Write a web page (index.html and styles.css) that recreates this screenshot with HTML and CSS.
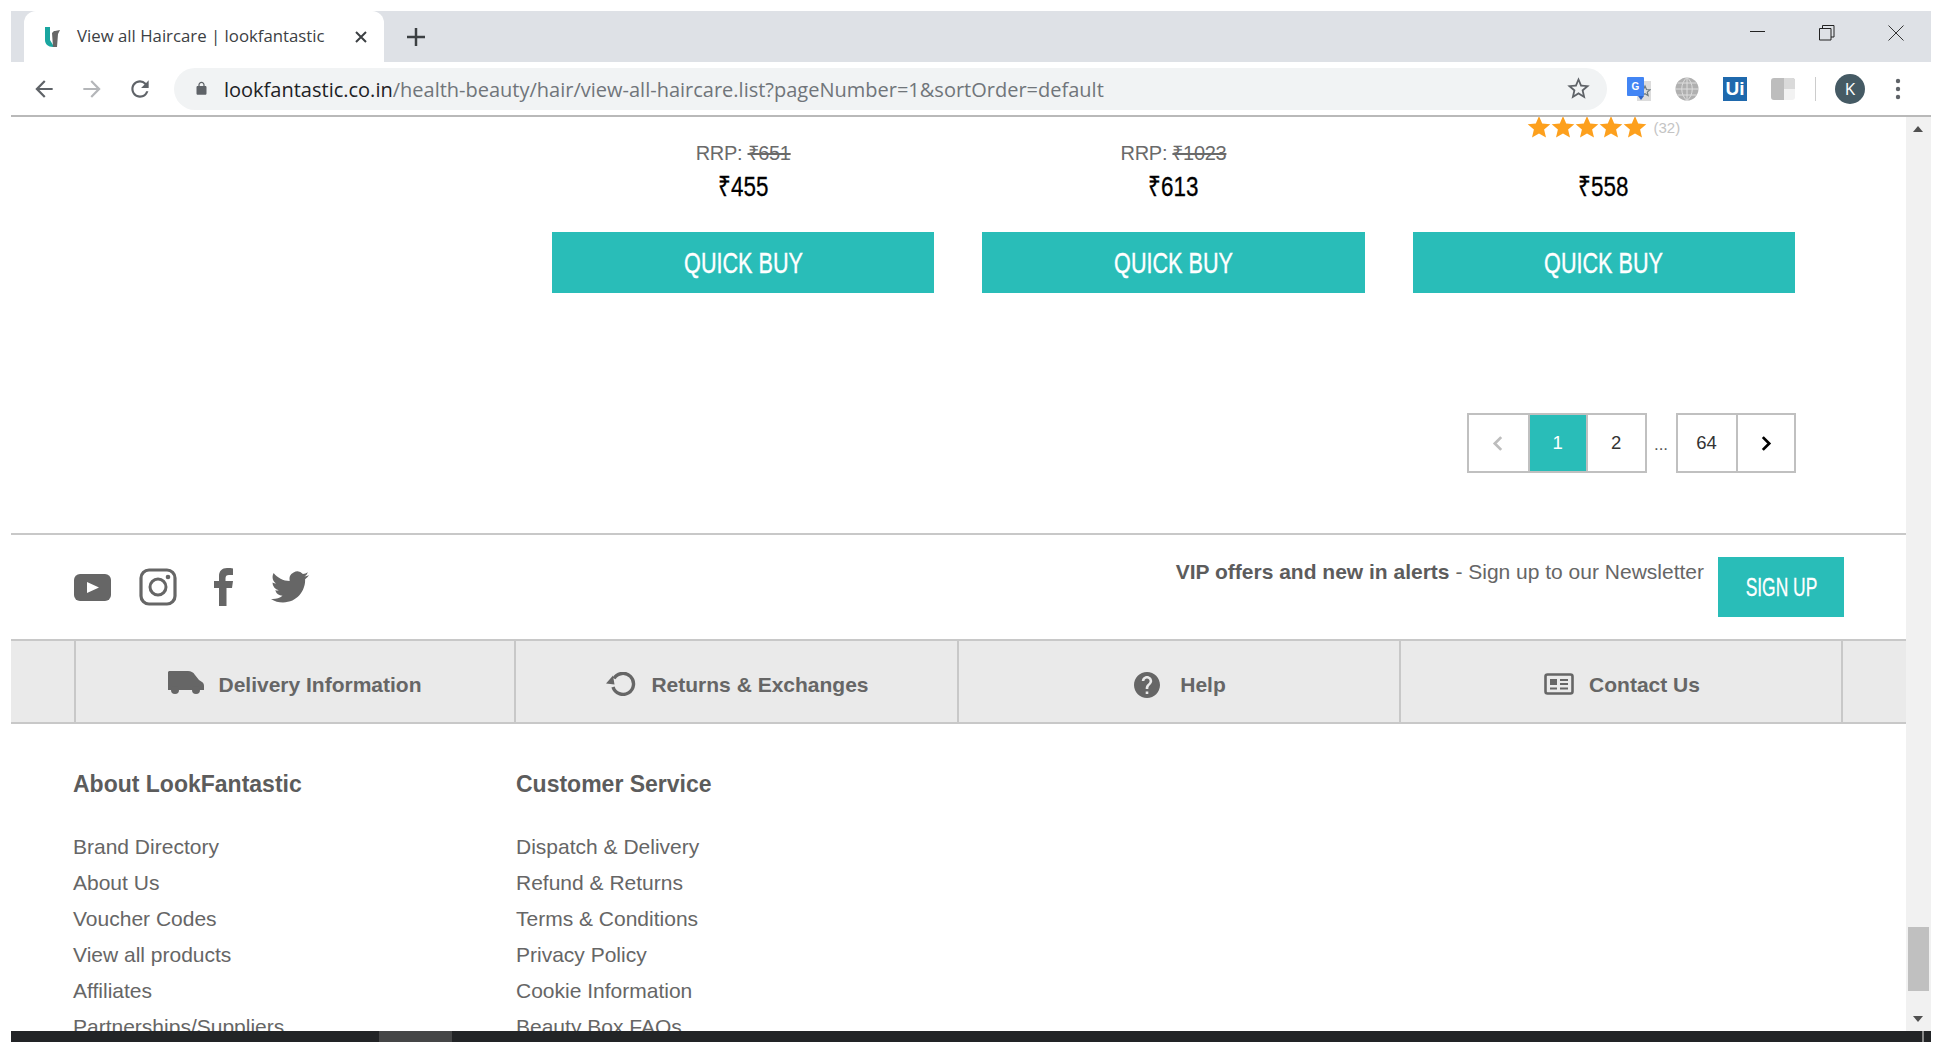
FILE: index.html
```html
<!DOCTYPE html>
<html lang="en">

<head>
    <meta charset="UTF-8" />
    <title>View all Haircare | lookfantastic</title>
    <link rel="stylesheet" href="styles.css">
</head>

<body>
    <svg class="defs" width="0" height="0">
        <symbol id="star" viewBox="0 0 24 24">
            <path d="M12 1l3.2 7.6 8.1.7-6.2 5.3 1.9 8-7-4.2-7 4.200 1.900-8L.7 9.300l8.100-.7z" />
        </symbol>
    </svg>
    <div class="window">
        <div class="tabstrip">
            <div class="tab">
                <svg class="favicon" viewBox="0 0 16 20">
                    <path fill="#1aa6a0" d="M0 0h5v13l3 5v2C3 20 0 17 0 13z" />
                    <path fill="#666" d="M7 6l2-2 1 0 5-1-2 4-1 13H8z" />
                </svg>
                <span class="tab_title">View all Haircare | lookfantastic</span>
                <svg class="tab_close" viewBox="0 0 14 14">
                    <path d="M2 2l10 10M12 2L2 12" stroke="#3c4043" stroke-width="2" />
                </svg>
            </div>
            <svg class="new_tab" viewBox="0 0 16 16">
                <path d="M8 0v16M0 8h16" stroke="#3c4043" stroke-width="2.200" />
            </svg>
            <div class="win_controls">
                <svg class="win_btn" viewBox="0 0 16 16"><path d="M0 6.500h15" stroke="#222" /></svg>
                <svg class="win_btn" viewBox="0 0 16 16">
                    <path d="M.5 3.500h11.500v11.500H.5zM3.500 3.500V.5h11.500v11.500H12" fill="none" stroke="#222" />
                </svg>
                <svg class="win_btn" viewBox="0 0 16 16"><path d="M.5.500l15 15M15.500.500l-15 15" stroke="#333" /></svg>
            </div>
        </div>

        <div class="toolbar">
            <svg class="nav_icon" viewBox="0 0 24 24"><path fill="#5f6368" d="M20 11H7.830l5.590-5.590L12 4l-8 8 8 8 1.410-1.410L7.830 13H20v-2z" /></svg>
            <svg class="nav_icon" viewBox="0 0 24 24"><path fill="#b4b6b9" d="M4 11h12.170l-5.590-5.590L12 4l8 8-8 8-1.410-1.410L16.170 13H4v-2z" /></svg>
            <svg class="nav_icon" viewBox="0 0 24 24"><path fill="#5f6368" d="M17.650 6.350A7.958 7.958 0 0012 4c-4.420 0-7.990 3.580-7.990 8s3.570 8 7.990 8c3.730 0 6.840-2.550 7.730-6h-2.080A5.990 5.990 0 0112 18c-3.310 0-6-2.690-6-6s2.690-6 6-6c1.660 0 3.140.69 4.220 1.780L13 11h7V4l-2.350 2.350z" /></svg>
            <div class="omnibox">
                <svg class="lock" viewBox="0 0 24 24"><path fill="#5f6368" d="M18 8h-1V6c0-2.760-2.240-5-5-5S7 3.240 7 6v2H6c-1.100 0-2 .9-2 2v10c0 1.100.9 2 2 2h12c1.100 0 2-.9 2-2V10c0-1.100-.9-2-2-2zm-9-2c0-1.660 1.340-3 3-3s3 1.340 3 3v2H9V6z" /></svg>
                <span class="url"><span class="url_host">lookfantastic.co.in</span>/health-beauty/hair/view-all-haircare.list?pageNumber=1&amp;sortOrder=default</span>
                <svg class="bookmark" viewBox="0 0 24 24"><path fill="#5f6368" d="M22 9.240l-7.190-.62L12 2 9.190 8.630 2 9.240l5.460 4.730L5.820 21 12 17.270 18.180 21l-1.630-7.030L22 9.240zM12 15.400l-3.760 2.270 1-4.280-3.320-2.880 4.380-.38L12 6.100l1.710 4.040 4.380.38-3.320 2.880 1 4.280L12 15.400z" /></svg>
            </div>
            <div class="extensions">
                <div class="ext ext_translate">
                    <svg class="translate_back" viewBox="0 0 14 20">
                        <rect width="14" height="20" fill="#dcdcdc" />
                        <path d="M8 5l1.500 3.500 3.500.3-2.700 2.300.8 3.400L8 12.700l-3 1.800.8-3.400L3 8.800l3.500-.3z" fill="none" stroke="#6c7a80" stroke-width="1.200" />
                    </svg>
                    <span class="translate_front">G</span>
                    <span class="translate_tail"></span>
                </div>
                <svg class="ext" viewBox="0 0 24 24">
                    <circle cx="12" cy="12" r="11.500" fill="#b0b0b0" />
                    <path d="M.5 12h23M2.500 6h19M2.500 18h19M12 .5v23M12 .5C5 6 5 18 12 23.500M12 .5C19 6 19 18 12 23.500" fill="none" stroke="#ddd" />
                </svg>
                <div class="ext ext_ui">Ui</div>
                <svg class="ext" viewBox="0 0 24 24">
                    <path fill="#bdbdbd" d="M3 1h18a3 3 0 013 3v8H13v11H3a3 3 0 01-3-3V4a3 3 0 013-3z" />
                    <path fill="#dadada" d="M13 1h8a3 3 0 013 3v8H13z" />
                    <path fill="#f2f2f2" d="M13 12h11v8a3 3 0 01-3 3h-8z" />
                </svg>
                <span class="ext_sep"></span>
                <div class="avatar">K</div>
                <svg class="menu_dots" viewBox="0 0 6 22">
                    <circle cx="3" cy="3" r="2.200" fill="#5f6368" />
                    <circle cx="3" cy="11" r="2.200" fill="#5f6368" />
                    <circle cx="3" cy="19" r="2.200" fill="#5f6368" />
                </svg>
            </div>
        </div>

        <div class="viewport">
            <div class="page">
                <div class="products">
                    <div class="card">
                        <div class="rating"></div>
                        <div class="rrp">RRP: <s>₹651</s></div>
                        <div class="price"><span>₹455</span></div>
                        <div class="quick_buy"><span>QUICK BUY</span></div>
                    </div>
                    <div class="card">
                        <div class="rating"></div>
                        <div class="rrp">RRP: <s>₹1023</s></div>
                        <div class="price"><span>₹613</span></div>
                        <div class="quick_buy"><span>QUICK BUY</span></div>
                    </div>
                    <div class="card">
                        <div class="rating">
                            <svg class="star"><use href="#star" /></svg>
                            <svg class="star"><use href="#star" /></svg>
                            <svg class="star"><use href="#star" /></svg>
                            <svg class="star"><use href="#star" /></svg>
                            <svg class="star"><use href="#star" /></svg>
                            <span class="rating_count">(32)</span>
                        </div>
                        <div class="rrp"></div>
                        <div class="price"><span>₹558</span></div>
                        <div class="quick_buy"><span>QUICK BUY</span></div>
                    </div>
                </div>

                <div class="pagination">
                    <div class="page_group">
                        <div class="page_cell page_prev">
                            <svg class="chevron" viewBox="0 0 10 16"><path d="M8 2L2 8l6 6" fill="none" stroke="#bdbdbd" stroke-width="2.600" /></svg>
                        </div>
                        <div class="page_cell page_active">1</div>
                        <div class="page_cell">2</div>
                    </div>
                    <span class="page_dots">...</span>
                    <div class="page_group">
                        <div class="page_cell">64</div>
                        <div class="page_cell">
                            <svg class="chevron" viewBox="0 0 10 16"><path d="M2 2l6 6-6 6" fill="none" stroke="#000" stroke-width="2.600" /></svg>
                        </div>
                    </div>
                </div>

                <div class="social_bar">
                    <div class="social_icons">
                        <svg class="social_yt" viewBox="0 0 37 27">
                            <rect width="37" height="27" rx="6" fill="#666" />
                            <path d="M13 8l12 5.500L13 19z" fill="#fff" />
                        </svg>
                        <svg class="social_ig" viewBox="0 0 38 38">
                            <rect x="2" y="2" width="34" height="34" rx="8" fill="none" stroke="#666" stroke-width="3.200" />
                            <circle cx="19" cy="19" r="8" fill="none" stroke="#666" stroke-width="3" />
                            <circle cx="29" cy="9" r="2.300" fill="#666" />
                        </svg>
                        <svg class="social_fb" viewBox="0 0 19 38">
                            <path fill="#666" d="M5 38V20H0v-7h5V8c0-5 3-8 8-8 2.500 0 4.500.2 6 .4V7h-4c-2.500 0-3.500 1-3.500 3.500V13H19l-1 7h-5.500v18z" />
                        </svg>
                        <svg class="social_tw" viewBox="0 0 24 24">
                            <path fill="#666" d="M23.953 4.570a10 10 0 01-2.825.775 4.958 4.958 0 002.163-2.723c-.951.555-2.005.959-3.127 1.184a4.920 4.920 0 00-8.384 4.482C7.690 8.095 4.067 6.130 1.640 3.162a4.822 4.822 0 00-.666 2.475c0 1.710.870 3.213 2.188 4.096a4.904 4.904 0 01-2.228-.616v.060a4.923 4.923 0 003.946 4.827 4.996 4.996 0 01-2.212.085 4.936 4.936 0 004.604 3.417 9.867 9.867 0 01-6.102 2.105c-.390 0-.779-.023-1.170-.067a13.995 13.995 0 007.557 2.209c9.053 0 13.998-7.496 13.998-13.985 0-.210 0-.420-.015-.630A9.935 9.935 0 0024 4.590z" />
                        </svg>
                    </div>
                    <div class="newsletter">
                        <p class="newsletter_text"><b>VIP offers and new in alerts</b> - Sign up to our Newsletter</p>
                        <div class="sign_up"><span>SIGN UP</span></div>
                    </div>
                </div>

                <div class="info_bar">
                    <div class="info_item info_first">
                        <svg class="info_truck" viewBox="0 0 36 24">
                            <path fill="#666" d="M1 0h19c3 0 5 1 7 4l4 5 3 2c1.500 1 2 2 2 4v4H0V1z" />
                            <circle cx="7" cy="19" r="4" fill="#666" />
                            <circle cx="28" cy="19" r="4" fill="#666" />
                        </svg>
                        <span>Delivery Information</span>
                    </div>
                    <div class="info_item">
                        <svg class="info_return" viewBox="0 0 30 24">
                            <path d="M8 6.500A10.500 10.500 0 1 1 7 15" fill="none" stroke="#666" stroke-width="3.400" />
                            <path d="M0 11.500l7-8 1.500 9z" fill="#666" />
                        </svg>
                        <span>Returns &amp; Exchanges</span>
                    </div>
                    <div class="info_item">
                        <svg class="info_help" viewBox="2 2 20 20"><path fill="#666" d="M12 2C6.480 2 2 6.480 2 12s4.480 10 10 10 10-4.480 10-10S17.520 2 12 2zm1 17h-2v-2h2v2zm2.070-7.750l-.9.920C13.450 12.900 13 13.500 13 15h-2v-.5c0-1.100.45-2.100 1.170-2.830l1.240-1.260c.37-.36.59-.86.59-1.410 0-1.100-.9-2-2-2s-2 .9-2 2H8c0-2.210 1.790-4 4-4s4 1.790 4 4c0 .88-.36 1.680-.93 2.250z" /></svg>
                        <span>Help</span>
                    </div>
                    <div class="info_item">
                        <svg class="info_contact" viewBox="0 0 30 22">
                            <rect x="1.500" y="1.500" width="27" height="19" rx="2" fill="none" stroke="#666" stroke-width="2.600" />
                            <rect x="6" y="6" width="7" height="6" fill="#666" />
                            <path d="M6 15.500h7M16 7h8M16 11h8M16 15.500h8" stroke="#666" stroke-width="2.200" />
                        </svg>
                        <span>Contact Us</span>
                    </div>
                </div>

                <div class="footer_links">
                    <div class="footer_col">
                        <h4>About LookFantastic</h4>
                        <a>Brand Directory</a>
                        <a>About Us</a>
                        <a>Voucher Codes</a>
                        <a>View all products</a>
                        <a>Affiliates</a>
                        <a>Partnerships/Suppliers</a>
                    </div>
                    <div class="footer_col">
                        <h4>Customer Service</h4>
                        <a>Dispatch &amp; Delivery</a>
                        <a>Refund &amp; Returns</a>
                        <a>Terms &amp; Conditions</a>
                        <a>Privacy Policy</a>
                        <a>Cookie Information</a>
                        <a>Beauty Box FAQs</a>
                    </div>
                </div>
            </div>

            <div class="scrollbar">
                <span class="arrow_up"></span>
                <div class="thumb"></div>
                <span class="arrow_down"></span>
            </div>
        </div>

        <div class="taskbar">
            <span class="task_active"></span>
            <span class="task_clock">11:45 PM</span>
            <span class="task_edge"></span>
        </div>
    </div>
</body>

</html>
```

FILE: styles.css
```css
* {
    box-sizing: border-box;
}

html,
body {
    height: 100%;
    margin: 0;
    overflow: hidden;
    background: #fff;
}

body {
    padding: 11px 11px 0;
    font-family: "Liberation Sans", Arial, sans-serif;
}

.defs {
    display: block;
    height: 0;
}

.window {
    height: 1031px;
    display: flex;
    flex-direction: column;
    overflow: hidden;
}

/* browser chrome */
.tabstrip {
    height: 51px;
    flex: none;
    display: flex;
    align-items: center;
    background: #dee1e6;
}

.tab {
    align-self: stretch;
    width: 360px;
    margin-left: 13px;
    padding-left: 21px;
    display: flex;
    align-items: center;
    background: #fff;
    border-radius: 12px 12px 0 0;
}

.favicon {
    width: 16px;
    height: 20px;
    margin-right: 16px;
}

.tab_title {
    width: 277px;
    margin-top: -2px;
    font: 16.800px "Open Sans", sans-serif;
    color: #3c4043;
    white-space: nowrap;
}

.tab_close {
    width: 14px;
    height: 14px;
}

.new_tab {
    width: 18px;
    height: 18px;
    margin-left: 23px;
}

.win_controls {
    margin-left: auto;
    margin-right: 27px;
    margin-top: -8px;
    display: flex;
    gap: 53px;
}

.win_btn {
    width: 16px;
    height: 16px;
}

.toolbar {
    height: 55px;
    flex: none;
    display: flex;
    align-items: center;
    padding-left: 20px;
    border-bottom: 2px solid #b9b9b9;
    background: #fff;
}

.nav_icon {
    width: 26px;
    height: 26px;
    margin-right: 22px;
}

.omnibox {
    width: 1433px;
    height: 42px;
    margin-left: -1px;
    flex: none;
    display: flex;
    align-items: center;
    padding-left: 20px;
    border-radius: 21px;
    background: #f1f3f4;
}

.lock {
    width: 15px;
    height: 17px;
}

.url {
    margin-left: 15px;
    margin-top: 1px;
    font: 20px "Open Sans", sans-serif;
    color: #70757a;
    white-space: nowrap;
}

.url_host {
    color: #202124;
}

.bookmark {
    width: 27px;
    height: 27px;
    margin-left: auto;
    margin-right: 15px;
}

.extensions {
    display: flex;
    align-items: center;
    margin-left: 20px;
}

.ext {
    width: 24px;
    height: 24px;
    margin-right: 24px;
    flex: none;
}

.ext_translate {
    position: relative;
}

.translate_back {
    position: absolute;
    top: 4px;
    right: 0;
    width: 14px;
    height: 20px;
}

.translate_front {
    position: absolute;
    top: 0;
    left: 0;
    width: 17px;
    height: 19px;
    background: #4285f4;
    border-radius: 1px;
    font: bold 10px/19px "Liberation Sans", sans-serif;
    color: #fff;
    text-align: center;
}

.translate_tail {
    position: absolute;
    top: 19px;
    left: 11px;
    width: 0;
    height: 0;
    border-left: 3px solid transparent;
    border-right: 3px solid transparent;
    border-top: 4px solid #2f63c4;
}

.ext_ui {
    background: #1f69ad;
    color: #fff;
    font: bold 19px/24px "Liberation Sans", sans-serif;
    text-align: center;
}

.ext_sep {
    width: 1px;
    height: 24px;
    margin-left: -4px;
    margin-right: 19px;
    background: #ccc;
}

.avatar {
    width: 30px;
    height: 30px;
    border-radius: 50%;
    background: #455a64;
    color: #fff;
    font: 17px/30px "Open Sans", sans-serif;
    text-align: center;
}

.menu_dots {
    width: 6px;
    height: 22px;
    margin-left: 30px;
}

/* page */
.viewport {
    flex: 1;
    min-height: 0;
    display: flex;
}

.page {
    flex: 1;
    min-width: 0;
    overflow: hidden;
    background: #fff;
}

.products {
    display: grid;
    grid-template-columns: repeat(3, 1fr);
    column-gap: 48px;
    padding: 0 111px 0 541px;
}

.card {
    display: flex;
    flex-direction: column;
    align-items: center;
}

.rating {
    height: 25px;
    margin-top: -3px;
    display: flex;
    align-items: center;
}

.star {
    width: 24px;
    height: 24px;
    fill: #fda01d;
}

.rating_count {
    margin-left: 6px;
    margin-top: 2px;
    font-size: 15px;
    color: #c4c4c4;
}

.rrp {
    height: 28px;
    font-size: 20px;
    line-height: 28px;
    color: #6a6a6a;
    letter-spacing: -0.3px;
}

.price {
    height: 40px;
    font-size: 28px;
    line-height: 40px;
    color: #000;
}

.price span {
    display: inline-block;
    transform: scaleX(0.8);
    -webkit-text-stroke: 0.3px #000;
}

.quick_buy {
    align-self: stretch;
    height: 61px;
    margin-top: 25px;
    background: #29bdb8;
    color: #fff;
    font-size: 30px;
    line-height: 61px;
    text-align: center;
}

.quick_buy span {
    display: inline-block;
    transform: scaleX(0.72);
    -webkit-text-stroke: 0.4px #fff;
}

.pagination {
    margin-top: 120px;
    padding-right: 110px;
    display: flex;
    justify-content: flex-end;
    align-items: center;
}

.page_group {
    display: flex;
    border: 2px solid #c0c0c0;
}

.page_cell {
    width: 58.500px;
    height: 56px;
    display: flex;
    align-items: center;
    justify-content: center;
    font-size: 18.500px;
    color: #333;
    border-left: 2px solid #c0c0c0;
}

.page_cell:first-child {
    border-left: none;
    width: 58px;
}

.page_cell.page_prev {
    width: 59px;
}

.page_active {
    background: #29bdb8;
    color: #fff;
}

.page_dots {
    width: 29px;
    font-size: 17px;
    text-align: center;
    color: #555;
    padding-top: 3px;
}

.chevron {
    width: 12px;
    height: 17px;
}

.social_bar {
    height: 106px;
    margin-top: 60px;
    padding: 0 62px;
    border-top: 2px solid #c8c8c8;
    display: flex;
    justify-content: space-between;
}

.social_icons {
    display: flex;
    align-items: center;
    gap: 28px;
    height: 104px;
}

.social_yt {
    width: 37px;
    height: 27px;
    margin-left: 1px;
}

.social_ig {
    width: 38px;
    height: 38px;
}

.social_fb {
    width: 19px;
    height: 38px;
    margin-left: 9px;
}

.social_tw {
    width: 38px;
    height: 38px;
    margin-left: 10px;
}

.newsletter {
    display: flex;
    margin-top: 22px;
    gap: 14px;
}

.newsletter_text {
    margin: 0;
    padding-top: 2px;
    font-size: 21px;
    line-height: 25px;
    color: #666;
}

.newsletter_text b {
    color: #5c5c5c;
}

.sign_up {
    width: 126px;
    height: 60px;
    background: #29bdb8;
    color: #fff;
    font-size: 26px;
    line-height: 60px;
    text-align: center;
}

.sign_up span {
    display: inline-block;
    transform: scaleX(0.67);
    -webkit-text-stroke: 0.3px #fff;
}

.info_bar {
    height: 85px;
    padding-left: 63px;
    padding-right: 63px;
    display: grid;
    grid-template-columns: 440px 443px 442px 1fr;
    background: #eaeaea;
    border-top: 2px solid #c8c8c8;
    border-bottom: 2px solid #c8c8c8;
}

.info_item {
    display: flex;
    align-items: center;
    justify-content: center;
    gap: 15px;
    padding-top: 7px;
    padding-left: 2px;
    font-size: 21px;
    font-weight: bold;
    color: #666;
    border-left: 2px solid #c8c8c8;
}

.info_item.info_first {
    gap: 14px;
    padding-left: 0;
}

.info_item:last-child {
    border-right: 2px solid #c8c8c8;
}

.info_truck {
    width: 36px;
    height: 24px;
    margin-top: -4px;
}

.info_return {
    width: 30px;
    height: 24px;
    margin-top: -3px;
}

.info_help {
    width: 26px;
    height: 26px;
    margin-right: 5px;
}

.info_contact {
    width: 30px;
    height: 22px;
    margin-top: -3px;
}

.footer_links {
    padding: 45px 0 0 62px;
    display: flex;
}

.footer_col {
    width: 443px;
    display: flex;
    flex-direction: column;
}

.footer_col h4 {
    margin: 0 0 30px;
    height: 30px;
    font-size: 23px;
    line-height: 30px;
    color: #5c5c5c;
}

.footer_col a {
    height: 36px;
    font-size: 21px;
    line-height: 36px;
    color: #666;
}

/* scrollbar */
.scrollbar {
    width: 25px;
    flex: none;
    position: relative;
    background: #f1f1f1;
}

.arrow_up,
.arrow_down {
    position: absolute;
    left: 7px;
    width: 0;
    height: 0;
    border-left: 5.500px solid transparent;
    border-right: 5.500px solid transparent;
}

.arrow_up {
    top: 9px;
    border-bottom: 6px solid #505050;
}

.arrow_down {
    bottom: 9px;
    border-top: 6px solid #505050;
}

.thumb {
    position: absolute;
    top: 810px;
    left: 2px;
    width: 21px;
    height: 64px;
    background: #c0c0c0;
}

/* taskbar under the window */
.taskbar {
    height: 11px;
    flex: none;
    position: relative;
    overflow: hidden;
    background: #222426;
}

.task_active {
    position: absolute;
    left: 368px;
    top: 0;
    width: 73px;
    height: 100%;
    background: #454647;
}

.task_clock {
    position: absolute;
    left: 1758px;
    top: 8px;
    font-size: 15px;
    color: #eee;
}

.task_edge {
    position: absolute;
    right: 7px;
    top: 0;
    width: 2px;
    height: 100%;
    background: #888;
}
```
